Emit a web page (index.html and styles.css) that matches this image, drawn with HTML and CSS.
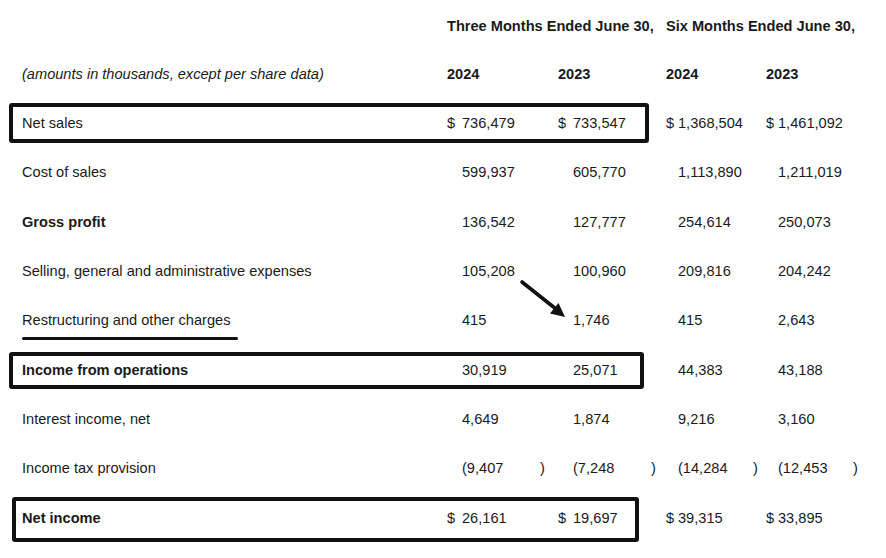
FILE: index.html
```html
<!DOCTYPE html>
<html lang="en">
<head>
<meta charset="utf-8">
<title>Income statement</title>
<link rel="stylesheet" href="styles.css">
</head>
<body>
<div class="sheet">
  <div class="row head">
    <div class="label"></div>
    <div class="span2">Three Months Ended June 30,</div>
    <div class="span2">Six Months Ended June 30,</div>
  </div>
  <div class="row years">
    <div class="label note">(amounts in thousands, except per share data)</div>
    <div class="c">2024</div>
    <div class="c">2023</div>
    <div class="c">2024</div>
    <div class="c">2023</div>
  </div>
  <div class="row">
    <div class="label">Net sales</div>
    <div class="c q"><span class="cur">$</span>736,479</div>
    <div class="c q"><span class="cur">$</span>733,547</div>
    <div class="c h"><span class="cur">$</span>1,368,504</div>
    <div class="c h"><span class="cur">$</span>1,461,092</div>
  </div>
  <div class="row">
    <div class="label">Cost of sales</div>
    <div class="c q">599,937</div>
    <div class="c q">605,770</div>
    <div class="c h">1,113,890</div>
    <div class="c h">1,211,019</div>
  </div>
  <div class="row">
    <div class="label bold">Gross profit</div>
    <div class="c q">136,542</div>
    <div class="c q">127,777</div>
    <div class="c h">254,614</div>
    <div class="c h">250,073</div>
  </div>
  <div class="row">
    <div class="label">Selling, general and administrative expenses</div>
    <div class="c q">105,208</div>
    <div class="c q">100,960</div>
    <div class="c h">209,816</div>
    <div class="c h">204,242</div>
  </div>
  <div class="row">
    <div class="label"><span class="marked">Restructuring and other charges</span></div>
    <div class="c q">415</div>
    <div class="c q">1,746</div>
    <div class="c h">415</div>
    <div class="c h">2,643</div>
  </div>
  <div class="row">
    <div class="label bold">Income from operations</div>
    <div class="c q">30,919</div>
    <div class="c q">25,071</div>
    <div class="c h">44,383</div>
    <div class="c h">43,188</div>
  </div>
  <div class="row">
    <div class="label">Interest income, net</div>
    <div class="c q">4,649</div>
    <div class="c q">1,874</div>
    <div class="c h">9,216</div>
    <div class="c h">3,160</div>
  </div>
  <div class="row">
    <div class="label">Income tax provision</div>
    <div class="c q"><span class="neg">(9,407</span>)</div>
    <div class="c q"><span class="neg">(7,248</span>)</div>
    <div class="c h"><span class="neg">(14,284</span>)</div>
    <div class="c h"><span class="neg">(12,453</span>)</div>
  </div>
  <div class="row">
    <div class="label bold">Net income</div>
    <div class="c q"><span class="cur">$</span>26,161</div>
    <div class="c q"><span class="cur">$</span>19,697</div>
    <div class="c h"><span class="cur">$</span>39,315</div>
    <div class="c h"><span class="cur">$</span>33,895</div>
  </div>

  <div class="box box-sales"></div>
  <div class="box box-ops"></div>
  <div class="box box-net"></div>
  <svg class="arrow" width="56" height="48" viewBox="0 0 56 48">
    <line x1="7" y1="7" x2="41" y2="34" stroke="#111" stroke-width="3.6" stroke-linecap="round"/>
    <polygon points="50,42 35,38.5 43.5,28" fill="#111"/>
  </svg>
</div>
</body>
</html>
```

FILE: styles.css
```css
html, body {
  margin: 0;
  padding: 0;
  background: #ffffff;
}

.sheet {
  position: relative;
  width: 886px;
  height: 558px;
  font-family: "Liberation Sans", Arial, sans-serif;
  font-size: 14.6px;
  color: #1a1a1a;
}

.row {
  display: grid;
  grid-template-columns: 425px 111px 108px 100px 1fr;
  align-items: center;
  height: 49.33px;
  padding-left: 22px;
}

.row.head {
  grid-template-columns: 425px 219px 1fr;
  height: 46px;
  padding-top: 3px;
  font-weight: bold;
}

.span2 {
  white-space: nowrap;
}

.years .c {
  font-weight: bold;
}

.note {
  font-style: italic;
}

.bold {
  font-weight: bold;
}

.label {
  white-space: nowrap;
}

.c {
  white-space: nowrap;
}

.c.q {
  padding-left: 15px;
}

.c.h {
  padding-left: 12px;
}

.cur {
  display: inline-block;
}

.q .cur {
  width: 15px;
  margin-left: -15px;
}

.h .cur {
  width: 12px;
  margin-left: -12px;
}

.neg {
  display: inline-block;
}

.q .neg {
  width: 78px;
}

.h .neg {
  width: 75px;
}

.marked {
  position: relative;
}

.marked::after {
  content: "";
  position: absolute;
  left: 0;
  top: 25px;
  width: 216px;
  height: 3px;
  border-radius: 2px;
  background: #111;
}

.box {
  position: absolute;
  box-sizing: border-box;
  border: 4px solid #111;
  border-radius: 3px;
}

.box-sales {
  left: 9px;
  top: 103px;
  width: 640px;
  height: 40px;
}

.box-ops {
  left: 9px;
  top: 352px;
  width: 635px;
  height: 37px;
}

.box-net {
  left: 12px;
  top: 497px;
  width: 627px;
  height: 45px;
}

.arrow {
  position: absolute;
  left: 515px;
  top: 275px;
}
```
